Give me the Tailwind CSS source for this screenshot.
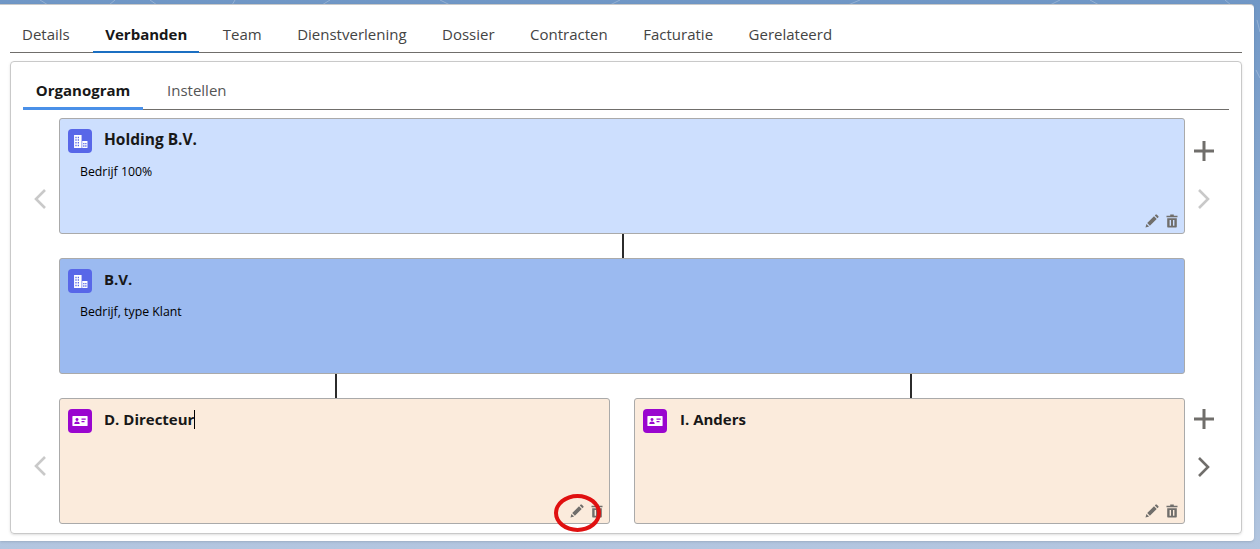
<!DOCTYPE html>
<html>
<head>
    <title>Organogram</title>
    <script src="https://cdn.jsdelivr.net/npm/@tailwindcss/browser@4"></script>
</head>
<body class="relative h-[549px] overflow-hidden bg-gradient-to-b from-[#7097c6] to-[#b3c6e0] font-['Open_Sans','Noto_Sans',sans-serif] text-[#181818]">
    <svg class="hidden">
        <symbol id="pencil" viewBox="0 0 14 14"><path fill="currentColor" d="M0.5 13.5l0.9-3.6 2.7 2.7zM2.2 9.1l6.8-6.8 2.7 2.7-6.8 6.8zM9.8 1.5l0.9-0.9c0.3-0.3 0.7-0.3 1 0l1.7 1.7c0.3 0.3 0.3 0.7 0 1l-0.9 0.9z"/></symbol>
        <symbol id="trash" viewBox="0 0 12 14"><path fill="currentColor" fill-rule="evenodd" d="M4.2 0.5h3.6v1.2h3.7v1.5h-11v-1.5h3.7zM1.2 4.2h9.6v8.3c0 0.6-0.4 1-1 1h-7.6c-0.6 0-1-0.4-1-1zM3.6 6v5.8h1.4v-5.8zM7 6v5.8h1.4v-5.8z"/></symbol>
        <symbol id="building" viewBox="0 0 14 14"><path fill="currentColor" fill-rule="evenodd" d="M1 1h7v12h-7zM2.2 2.5v1.4h1.2v-1.4zM4.4 2.5v1.4h1.2v-1.4zM2.2 5v1.4h1.2v-1.4zM4.4 5v1.4h1.2v-1.4zM2.2 7.5v1.4h1.2v-1.4zM4.4 7.5v1.4h1.2v-1.4zM2.2 10v1.4h1.2v-1.4zM4.4 10v1.4h1.2v-1.4z"/><path fill="currentColor" fill-rule="evenodd" d="M8.6 6.5h4.9v6.5h-4.9zM9.5 8.4v1.2h1.2v-1.2zM11.4 8.4v1.2h1.2v-1.2zM9.5 10.6v1.2h1.2v-1.2zM11.4 10.6v1.2h1.2v-1.2z"/></symbol>
        <symbol id="contact" viewBox="0 0 16 12"><path fill="currentColor" fill-rule="evenodd" d="M1 1h14c0.4 0 0.6 0.3 0.6 0.6v8.8c0 0.4-0.3 0.6-0.6 0.6h-14c-0.4 0-0.6-0.3-0.6-0.6v-8.8c0-0.4 0.3-0.6 0.6-0.6zM5 3a1.5 1.5 0 1 0 0.01 0zM2.3 9h5.4c0-1.6-1.2-2.4-2.7-2.4s-2.7 0.8-2.7 2.4zM9.5 3.5v1.3h4.2v-1.3zM9.5 6v1.3h3v-1.3z"/></symbol>
    </svg>

    <!-- faint pattern in the page background -->
    <svg class="absolute inset-0 w-[1260px] h-[549px] text-white/25" fill="none" stroke="currentColor">
        <path d="M40 0l8 5M115 0l-6 5M150 0l7 5M235 0l-3 5M330 0l-8 5M440 0l10 5M620 0l-10 5M860 0l-12 5M1060 0l-10 5M1090 0l9 5M1225 0l6 5M1257 20l3 12M1256 70l4 8"/>
    </svg>

    <div class="relative h-[537px] mt-1 mr-1.5 bg-white rounded-r border-t border-[#c9c9c9] pl-2.5 pr-3 pt-[15px] shadow">
        <div class="flex gap-[35.5px] h-[33px] border-b border-[#706e6b] pl-3 text-[15px] text-[#444]">
            <span class="leading-[28px]">Details</span>
            <span class="font-bold text-[#181818] -mx-3 px-3 h-[33px] leading-[28px] border-b-2 border-[#1b6fc2]">Verbanden</span>
            <span class="leading-[28px]">Team</span>
            <span class="leading-[28px]">Dienstverlening</span>
            <span class="leading-[28px]">Dossier</span>
            <span class="leading-[28px]">Contracten</span>
            <span class="leading-[28px]">Facturatie</span>
            <span class="leading-[28px]">Gerelateerd</span>
        </div>

        <div class="mt-2 h-[473px] border border-[#c9c9c9] rounded shadow-sm px-3 pt-[11px]">
            <div class="flex gap-6 h-[37px] border-b border-[#706e6b] text-[15px]">
                <span class="w-[120px] h-[37px] text-center font-bold leading-[35px] border-b-[3px] border-[#4a90e8]">Organogram</span>
                <span class="text-[#555] leading-[35px]">Instellen</span>
            </div>

            <div class="flex mt-2">
                <div class="w-9 h-[116px] flex items-center pl-2.5 pt-[46px] text-[#c9c9c9]">
                    <svg class="w-[14px] h-[22px]" viewBox="0 0 14 22"><path d="M12 2L3 11l9 9" fill="none" stroke="currentColor" stroke-width="2.6"/></svg>
                </div>
                <div class="relative flex-1 h-[116px] bg-[#cddffe] border border-[#aaa] rounded-[3px] pt-[10px] pl-2">
                    <div class="flex items-center gap-3 h-6">
                        <span class="w-6 h-6 rounded bg-[#5867e8] text-white flex items-center justify-center"><svg class="w-[15px] h-[15px]"><use href="#building"/></svg></span>
                        <span class="font-bold text-[15.5px] pb-0.5">Holding B.V.</span>
                    </div>
                    <p class="mt-2.5 ml-3 text-[12.3px] text-black">Bedrijf 100%</p>
                    <div class="absolute right-1.5 bottom-[5px] flex gap-[7px] text-[#706e6b]">
                        <svg class="w-[14px] h-[14px]"><use href="#pencil"/></svg>
                        <svg class="w-3 h-[14px]"><use href="#trash"/></svg>
                    </div>
                </div>
                <div class="w-11 h-[116px] flex flex-col items-center pr-1.5 pt-[22px] text-[#706e6b]">
                    <svg class="w-[22px] h-[22px]" viewBox="0 0 22 22"><path d="M11 1v20M1 11h20" stroke="currentColor" stroke-width="3"/></svg>
                    <svg class="w-[14px] h-[22px] mt-[26px] text-[#c9c9c9]" viewBox="0 0 14 22"><path d="M2 2l9 9-9 9" fill="none" stroke="currentColor" stroke-width="2.6"/></svg>
                </div>
            </div>

            <div class="flex justify-center h-6 pr-1.5"><div class="w-0.5 bg-[#2b2b2b]"></div></div>

            <div class="ml-9 mr-11 relative h-[116px] bg-[#9bbaf0] border border-[#aaa] rounded-[3px] pt-[10px] pl-2">
                <div class="flex items-center gap-3 h-6">
                    <span class="w-6 h-6 rounded bg-[#5867e8] text-white flex items-center justify-center"><svg class="w-[15px] h-[15px]"><use href="#building"/></svg></span>
                    <span class="font-bold text-[15px] pb-1">B.V.</span>
                </div>
                <p class="mt-2.5 ml-3 text-[12.3px] text-black">Bedrijf, type Klant</p>
            </div>

            <div class="ml-9 mr-11 grid grid-cols-2 gap-6 h-6">
                <div class="flex justify-center pl-[3px]"><div class="w-0.5 bg-[#2b2b2b]"></div></div>
                <div class="flex justify-center pl-[3px]"><div class="w-0.5 bg-[#2b2b2b]"></div></div>
            </div>

            <div class="flex">
                <div class="w-9 h-[126px] flex items-center pl-2.5 pt-[10px] text-[#c9c9c9]">
                    <svg class="w-[14px] h-[22px]" viewBox="0 0 14 22"><path d="M12 2L3 11l9 9" fill="none" stroke="currentColor" stroke-width="2.6"/></svg>
                </div>
                <div class="flex-1 grid grid-cols-2 gap-6">
                    <div class="relative h-[126px] bg-[#fbebdc] border border-[#aaa] rounded-[3px] pt-[10px] pl-2">
                        <div class="flex items-center gap-3 h-6">
                            <span class="w-6 h-6 rounded bg-[#9a06cf] text-white flex items-center justify-center"><svg class="w-4 h-3"><use href="#contact"/></svg></span>
                            <span class="font-bold text-[15px] border-r border-black h-[19px] leading-[18px] mb-[3px]">D. Directeur</span>
                        </div>
                        <div class="absolute right-1.5 bottom-[5px] flex gap-[7px] text-[#706e6b]">
                            <svg class="w-[14px] h-[14px]"><use href="#pencil"/></svg>
                            <svg class="w-3 h-[14px]"><use href="#trash"/></svg>
                        </div>
                        <div class="absolute left-[494px] top-[95px] w-[47px] h-[38px] border-4 border-[#e01010] rounded-[50%]"></div>
                    </div>
                    <div class="relative h-[126px] bg-[#fbebdc] border border-[#aaa] rounded-[3px] pt-[10px] pl-2">
                        <div class="flex items-center gap-3 h-6">
                            <span class="w-6 h-6 rounded bg-[#9a06cf] text-white flex items-center justify-center"><svg class="w-4 h-3"><use href="#contact"/></svg></span>
                            <span class="font-bold text-[15px] pb-[3px] pl-px">I. Anders</span>
                        </div>
                        <div class="absolute right-1.5 bottom-[5px] flex gap-[7px] text-[#706e6b]">
                            <svg class="w-[14px] h-[14px]"><use href="#pencil"/></svg>
                            <svg class="w-3 h-[14px]"><use href="#trash"/></svg>
                        </div>
                    </div>
                </div>
                <div class="w-11 h-[126px] flex flex-col items-center pr-1.5 pt-[10px] text-[#706e6b]">
                    <svg class="w-[22px] h-[22px]" viewBox="0 0 22 22"><path d="M11 1v20M1 11h20" stroke="currentColor" stroke-width="3"/></svg>
                    <svg class="w-[14px] h-[22px] mt-[26px]" viewBox="0 0 14 22"><path d="M2 2l9 9-9 9" fill="none" stroke="currentColor" stroke-width="2.6"/></svg>
                </div>
            </div>
        </div>
    </div>
</body>
</html>
